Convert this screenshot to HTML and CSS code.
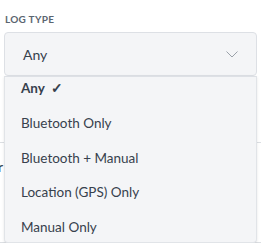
FILE: index.html
```html
<!DOCTYPE html>
<html lang="en">
<head>
  <meta charset="UTF-8" />
  <title>Log Type Filter</title>
  <link rel="stylesheet" href="styles.css">
</head>
<body>
  <div class="filter">
    <div class="filter-label">LOG TYPE</div>
    <div class="select-wrap">
      <div class="select">
        <span class="select-value">Any</span>
        <svg class="select-chevron" width="12" height="7" viewBox="0 0 12 7">
          <path d="M0.5 0.5 L6 6 L11.5 0.5" fill="none" stroke="#9aa1a9" stroke-width="1" />
        </svg>
      </div>
      <ul class="dropdown">
        <li class="dropdown-item selected">Any <span class="check">&#10003;</span></li>
        <li class="dropdown-item">Bluetooth Only</li>
        <li class="dropdown-item">Bluetooth + Manual</li>
        <li class="dropdown-item">Location (GPS) Only</li>
        <li class="dropdown-item">Manual Only</li>
      </ul>
    </div>
  </div>

  <!-- content behind the open menu -->
  <div class="behind-row first"></div>
  <div class="behind-row">
    <div class="behind-label"><span>Sensor</span></div>
  </div>
</body>
</html>
```

FILE: styles.css
```css
body {
  margin: 0;
  background: #fff;
  font-family: 'Lato', 'Noto Sans', sans-serif;
  color: #37414d;
}
.filter {
  padding: 13px 4px 0 4px;
}
.filter-label {
  font-size: 10px;
  font-weight: 700;
  color: #5b6570;
  letter-spacing: 0.3px;
  line-height: 12px;
  margin-left: 1px;
  margin-bottom: 7px;
}
.select-wrap {
  position: relative;
  z-index: 10;
}
.select {
  height: 44px;
  box-sizing: border-box;
  border: 1px solid #dde0e5;
  border-radius: 4px;
  background: #f4f5f7;
  display: flex;
  align-items: center;
  justify-content: space-between;
  padding: 0 18px 0 18px;
}
.select-value {
  font-size: 14px;
}
.select-chevron {
  display: block;
}
.dropdown {
  position: absolute;
  top: 44px;
  left: 0;
  right: 0;
  margin: 0;
  padding: 0;
  list-style: none;
  background: #f4f5f7;
  border: 1px solid #e1e4e8;
  border-top: 1px solid #dde0e5;
  border-radius: 0 0 4px 4px;
  box-shadow: 0 1px 3px rgba(0,0,0,0.10);
}
.dropdown-item {
  height: 34.5px;
  line-height: 34.5px;
  padding-left: 16px;
  font-size: 13.5px;
}
.dropdown-item:first-child {
  height: 22px;
  line-height: 22px;
  padding-bottom: 7px;
}
.dropdown-item:last-child {
  height: 32px;
}
.dropdown-item.selected {
  font-weight: 700;
}
.check {
  font-size: 14px;
  margin-left: 3px;
}
.behind-row {
  height: 99px;
  border-bottom: 1px solid #dcdfe3;
  font-size: 14px;
  color: #37414d;
}
.behind-row.first {
  height: 66px;
}
.behind-label {
  width: 3px;
  display: flex;
  justify-content: flex-end;
  padding-top: 15px;
  line-height: 17px;
}
.behind-label span {
  flex-shrink: 0;
  white-space: nowrap;
}
```
